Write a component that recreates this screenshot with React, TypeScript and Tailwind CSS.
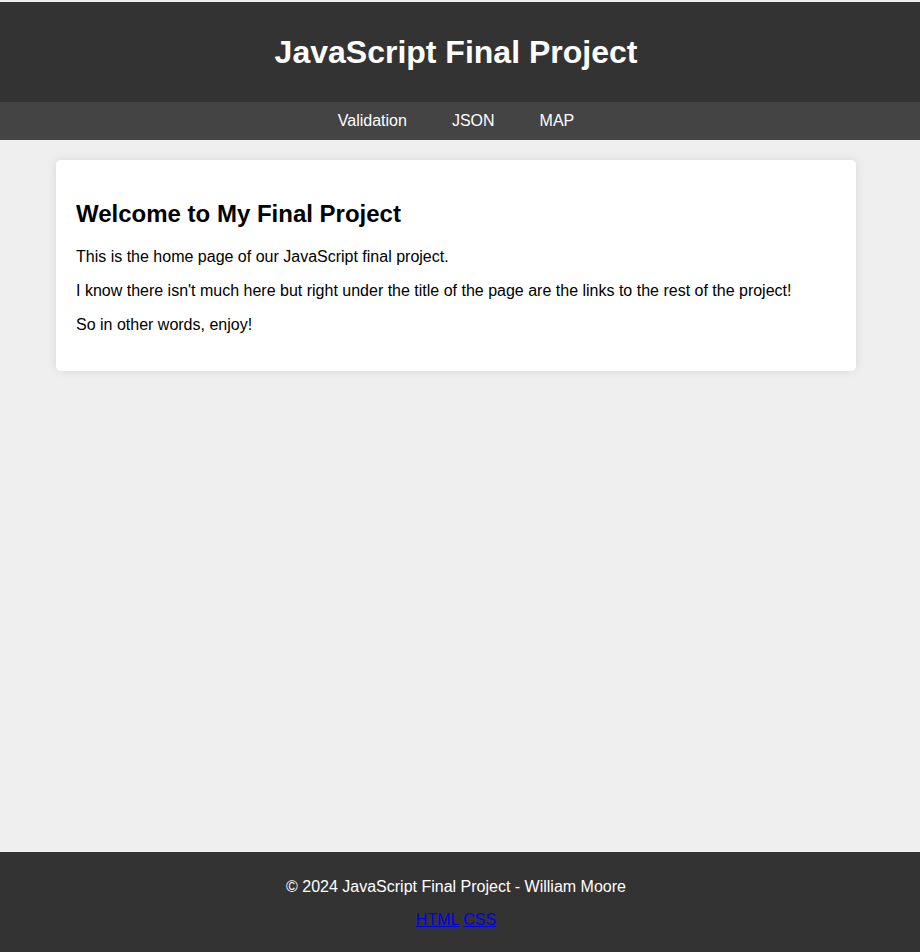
const links = ['Validation', 'JSON', 'MAP']

const App = () => {
    return (
        <div className="min-h-screen flex flex-col bg-[#efefef] pt-[2px] font-['Liberation_Sans',Arial,sans-serif] text-[16px] leading-[1.15]">
            <header className="h-[100px] bg-[#333333] flex items-center justify-center pr-[8px]">
                <h1 className="text-white text-[32px] font-bold leading-[1.15]">JavaScript Final Project</h1>
            </header>

            <nav className="h-[38px] bg-[#444444] flex items-center justify-center gap-[5px] pr-[8px]">
                {links.map((link) =>
                    <a key={link} href="#" className="text-white px-5">{link}</a>
                )}
            </nav>

            <main className="flex-1 pt-5 pl-[56px]">
                <div className="w-[800px] bg-white rounded-[5px] shadow-[0_0_10px_rgba(0,0,0,0.1)] p-5 text-black">
                    <h2 className="text-[24px] font-bold leading-[1.15] my-5">Welcome to My Final Project</h2>
                    <div className="flex flex-col gap-4 mb-4">
                        <p>This is the home page of our JavaScript final project.</p>
                        <p>I know there isn't much here but right under the title of the page are the links to the rest of the project!</p>
                        <p>So in other words, enjoy!</p>
                    </div>
                </div>
            </main>

            <footer className="h-[100px] bg-[#333333] text-white flex flex-col items-center pt-[26px] gap-[15px] pr-[8px]">
                <p>© 2024 JavaScript Final Project - William Moore</p>
                <p>
                    <a href="#" className="text-[#0000ee] underline">HTML</a>{' '}
                    <a href="#" className="text-[#0000ee] underline">CSS</a>
                </p>
            </footer>
        </div>
    )
}

export default App
